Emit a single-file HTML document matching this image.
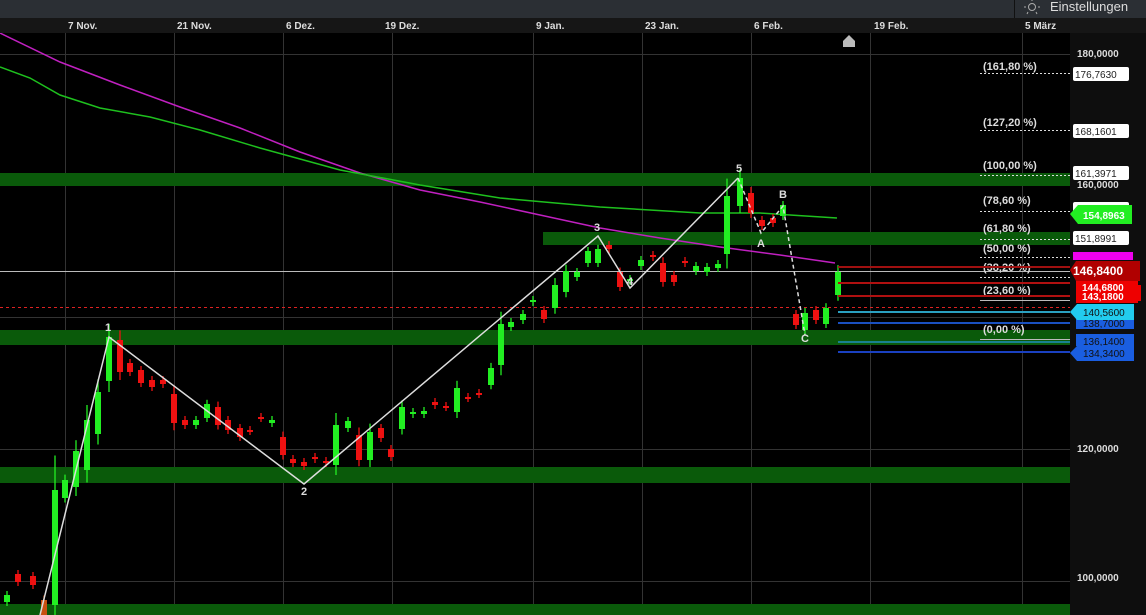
<!DOCTYPE html>
<html><head><meta charset="utf-8"><style>
html,body{margin:0;padding:0;background:#000;width:1146px;height:615px;overflow:hidden;font-family:"Liberation Sans",sans-serif}
svg{display:block}
</style></head><body>
<svg id="s" width="1146" height="615" xmlns="http://www.w3.org/2000/svg" font-family="Liberation Sans, sans-serif">
<rect width="1146" height="615" fill="#000"/>
<rect x="1070" y="33" width="76" height="582" fill="#0e0e0e"/>
<g stroke="#333" stroke-width="1">
<line x1="65.5" y1="33" x2="65.5" y2="615"/><line x1="174.5" y1="33" x2="174.5" y2="615"/><line x1="283.5" y1="33" x2="283.5" y2="615"/><line x1="392.5" y1="33" x2="392.5" y2="615"/><line x1="533.5" y1="33" x2="533.5" y2="615"/><line x1="642.5" y1="33" x2="642.5" y2="615"/><line x1="751.5" y1="33" x2="751.5" y2="615"/><line x1="870.5" y1="33" x2="870.5" y2="615"/><line x1="1022.5" y1="33" x2="1022.5" y2="615"/>
<line x1="0" y1="54.5" x2="1070" y2="54.5"/><line x1="0" y1="185.5" x2="1070" y2="185.5"/><line x1="0" y1="317.5" x2="1070" y2="317.5"/><line x1="0" y1="449.5" x2="1070" y2="449.5"/><line x1="0" y1="581.5" x2="1070" y2="581.5"/>
</g>
<g fill="#0a5a0a">
<rect x="0" y="173" width="1070" height="13"/><rect x="543" y="232" width="527" height="13"/><rect x="0" y="330" width="1070" height="15"/><rect x="0" y="467" width="1070" height="16"/><rect x="0" y="604" width="1070" height="11"/>
</g>
<line x1="0" y1="271.5" x2="1070" y2="271.5" stroke="#bbb" stroke-width="1"/>
<line x1="0" y1="307.5" x2="1070" y2="307.5" stroke="#d22" stroke-dasharray="3,3"/>
<polyline fill="none" stroke="#c020c0" stroke-width="1.5" points="0,33 60,62 120,85 180,107 240,128 300,152 360,173 420,190 480,202 540,215 600,228 660,238 720,247 780,255 835,263"/>
<polyline fill="none" stroke="#1ec01e" stroke-width="1.5" points="0,67 30,78 60,95 100,108 150,117 200,130 260,148 340,170 420,185 500,198 600,207 700,213 760,213 790,215 837,218"/>
<g id="c"></g>
<polyline fill="none" stroke="#ddd" stroke-width="1.5" points="40,615 109,337 304,484 598,236 630,288 738,178"/>
<polyline fill="none" stroke="#ddd" stroke-width="1.5" stroke-dasharray="4,3" points="738,178 761,233 783,206 805,335"/>
<g fill="#ddd" font-size="11" font-weight="bold" text-anchor="middle">
<text x="108" y="331">1</text><text x="304" y="495">2</text><text x="597" y="231">3</text><text x="630" y="285">4</text><text x="739" y="172">5</text><text x="761" y="247">A</text><text x="783" y="198">B</text><text x="805" y="342">C</text>
</g>
<g stroke="#ddd" stroke-dasharray="2,2">
<line x1="980" y1="73.5" x2="1070" y2="73.5"/><line x1="980" y1="130.5" x2="1070" y2="130.5"/><line x1="980" y1="175.5" x2="1070" y2="175.5"/><line x1="980" y1="211.5" x2="1070" y2="211.5"/><line x1="980" y1="239.5" x2="1070" y2="239.5"/><line x1="980" y1="257.5" x2="1070" y2="257.5"/><line x1="980" y1="277.5" x2="1070" y2="277.5"/>
</g>
<line x1="980" y1="300.5" x2="1070" y2="300.5" stroke="#bbb"/>
<line x1="980" y1="339.5" x2="1070" y2="339.5" stroke="#bbb"/>
<g fill="#ddd" font-size="11" font-weight="bold">
<text x="983" y="70">(161,80 %)</text><text x="983" y="126">(127,20 %)</text><text x="983" y="169">(100,00 %)</text><text x="983" y="204">(78,60 %)</text><text x="983" y="232">(61,80 %)</text><text x="983" y="252">(50,00 %)</text><text x="983" y="271">(38,20 %)</text><text x="983" y="294">(23,60 %)</text><text x="983" y="333">(0,00 %)</text>
</g>
<g stroke-width="2">
<line x1="838" y1="267" x2="1070" y2="267" stroke="#a01010"/><line x1="838" y1="283" x2="1070" y2="283" stroke="#b01010"/><line x1="838" y1="296" x2="1070" y2="296" stroke="#b01010"/><line x1="838" y1="312" x2="1070" y2="312" stroke="#2aa0c0"/><line x1="838" y1="323" x2="1070" y2="323" stroke="#1a50c0"/><line x1="838" y1="342" x2="1070" y2="342" stroke="#1a8090"/><line x1="838" y1="352" x2="1070" y2="352" stroke="#1a40c0"/>
</g>
<g fill="#ddd" font-size="10" font-weight="bold">
<text x="1077" y="57">180,0000</text><text x="1077" y="188">160,0000</text><text x="1077" y="452">120,0000</text><text x="1077" y="581">100,0000</text>
</g>
<g font-size="10">
<rect x="1073" y="67" width="56" height="14" rx="2" fill="#fff"/><text x="1075" y="78" fill="#222">176,7630</text>
<rect x="1073" y="124" width="56" height="14" rx="2" fill="#fff"/><text x="1075" y="135" fill="#222">168,1601</text>
<rect x="1073" y="166" width="56" height="14" rx="2" fill="#fff"/><text x="1075" y="177" fill="#222">161,3971</text>
<rect x="1073" y="202" width="56" height="12" rx="2" fill="#fff"/>
<path d="M1070,214 L1078,205 L1132,205 L1132,224 L1078,224 Z" fill="#22ee22"/><text x="1083" y="219" fill="#fff" font-weight="bold">154,8963</text>
<rect x="1073" y="231" width="56" height="14" rx="2" fill="#fff"/><text x="1075" y="242" fill="#222">151,8991</text>
<rect x="1073" y="252" width="60" height="8" fill="#ee00ee"/>
<rect x="1076" y="281" width="62" height="12" fill="#ee0000"/><text x="1082" y="291" fill="#fff" font-weight="bold">144,6800</text>
<rect x="1076" y="293" width="62" height="10" fill="#ee0000"/><rect x="1138" y="285" width="3" height="16" fill="#ee0000"/><text x="1082" y="300" fill="#fff" font-weight="bold">143,1800</text>
<path d="M1070,270 L1076,261 L1140,261 L1140,281 L1076,281 Z" fill="#b00000"/><text x="1073" y="275" fill="#fff" font-weight="bold" font-size="12">146,8400</text>
<rect x="1076" y="316" width="58" height="13" fill="#1a5ee0"/><text x="1083" y="327" fill="#111">138,7000</text>
<rect x="1076" y="334" width="58" height="12" fill="#1a5ee0"/><text x="1083" y="345" fill="#111">136,1400</text>
<path d="M1070,353 L1077,346 L1134,346 L1134,361 L1077,361 Z" fill="#1a5ee0"/><text x="1083" y="357" fill="#111">134,3400</text>
<path d="M1070,312 L1077,304 L1134,304 L1134,320 L1077,320 Z" fill="#22ccee"/><text x="1083" y="316" fill="#111">140,5600</text>
</g>
<rect x="0" y="0" width="1146" height="18" fill="#2b2f34"/>
<rect x="1014" y="0" width="1" height="18" fill="#111"/>
<g fill="none" stroke="#aaa" stroke-width="1"><circle cx="1032" cy="7" r="3.5"/><path d="M1026,7h-2M1038,7h2M1032,1v-1M1028,12l-1,2M1036,12l1,2"/></g>
<text x="1050" y="11" fill="#ddd" font-size="13">Einstellungen</text>
<rect x="0" y="18" width="1146" height="15" fill="#161616"/>
<g fill="#ddd" font-size="10" font-weight="bold">
<text x="68" y="29">7 Nov.</text><text x="177" y="29">21 Nov.</text><text x="286" y="29">6 Dez.</text><text x="385" y="29">19 Dez.</text><text x="536" y="29">9 Jan.</text><text x="645" y="29">23 Jan.</text><text x="754" y="29">6 Feb.</text><text x="874" y="29">19 Feb.</text><text x="1025" y="29">5 März</text>
</g>
<path d="M843,47 V41 L849,35 L855,41 V47 Z" fill="#bbb"/>
</svg>
<script>
var d=[[7,'g',595,602],[18,'r',574,582],[33,'r',576,585],[44,'o',600,615],[55,'g',490,605],[65,'g',480,498],[76,'g',451,487],[87,'g',420,470],[98,'g',392,434],[109,'g',337,381],[120,'r',340,372],[130,'r',363,372],[141,'r',370,383],[152,'r',380,387],[163,'r',380,384],[174,'r',394,423],[185,'r',420,425],[196,'g',420,425],[207,'g',404,418],[218,'r',407,425],[228,'r',420,430],[240,'r',428,437],[250,'r',430,431],[261,'r',417,418],[272,'g',420,423],[283,'r',437,455],[293,'r',459,463],[304,'r',462,466],[315,'r',457,459],[326,'r',461,463],[336,'g',425,465],[348,'g',421,428],[359,'r',435,460],[370,'g',432,460],[381,'r',428,438],[391,'r',449,457],[402,'g',407,429],[413,'g',412,414],[424,'g',411,414],[435,'r',402,405],[446,'r',406,407],[457,'g',388,412],[468,'r',397,398],[479,'r',393,394],[491,'g',368,385],[501,'g',324,365],[511,'g',322,327],[523,'g',314,320],[533,'g',300,302],[544,'r',310,319],[555,'g',285,308],[566,'g',271,292],[577,'g',272,277],[588,'g',251,263],[598,'g',249,263],[609,'r',245,249],[620,'r',272,287],[630,'g',279,281],[641,'g',260,266],[653,'r',255,257],[663,'r',263,282],[674,'r',275,282],[685,'r',261,263],[696,'g',266,271],[707,'g',267,272],[718,'g',264,268],[727,'g',196,254],[740,'g',178,206],[751,'r',193,213],[762,'r',220,226],[773,'r',218,223],[783,'g',205,216],[796,'r',314,325],[805,'g',313,330],[816,'r',310,320],[826,'g',308,324],[838,'g',272,295]];
var h='',col={g:'#22ee22',r:'#ee1111',o:'#c85010'};
d.forEach(function(c){var x=c[0],t=c[2],b=c[3],w=(b-t);var hi=t-Math.max(4,w*0.3),lo=b+Math.max(4,w*0.25);
h+='<line x1="'+x+'" y1="'+hi+'" x2="'+x+'" y2="'+lo+'" stroke="'+col[c[1]]+'" stroke-width="1.3"/>';
h+='<rect x="'+(x-3)+'" y="'+t+'" width="6" height="'+Math.max(2,b-t)+'" fill="'+col[c[1]]+'"/>';});
document.getElementById('c').innerHTML=h;
</script>
</body></html>
